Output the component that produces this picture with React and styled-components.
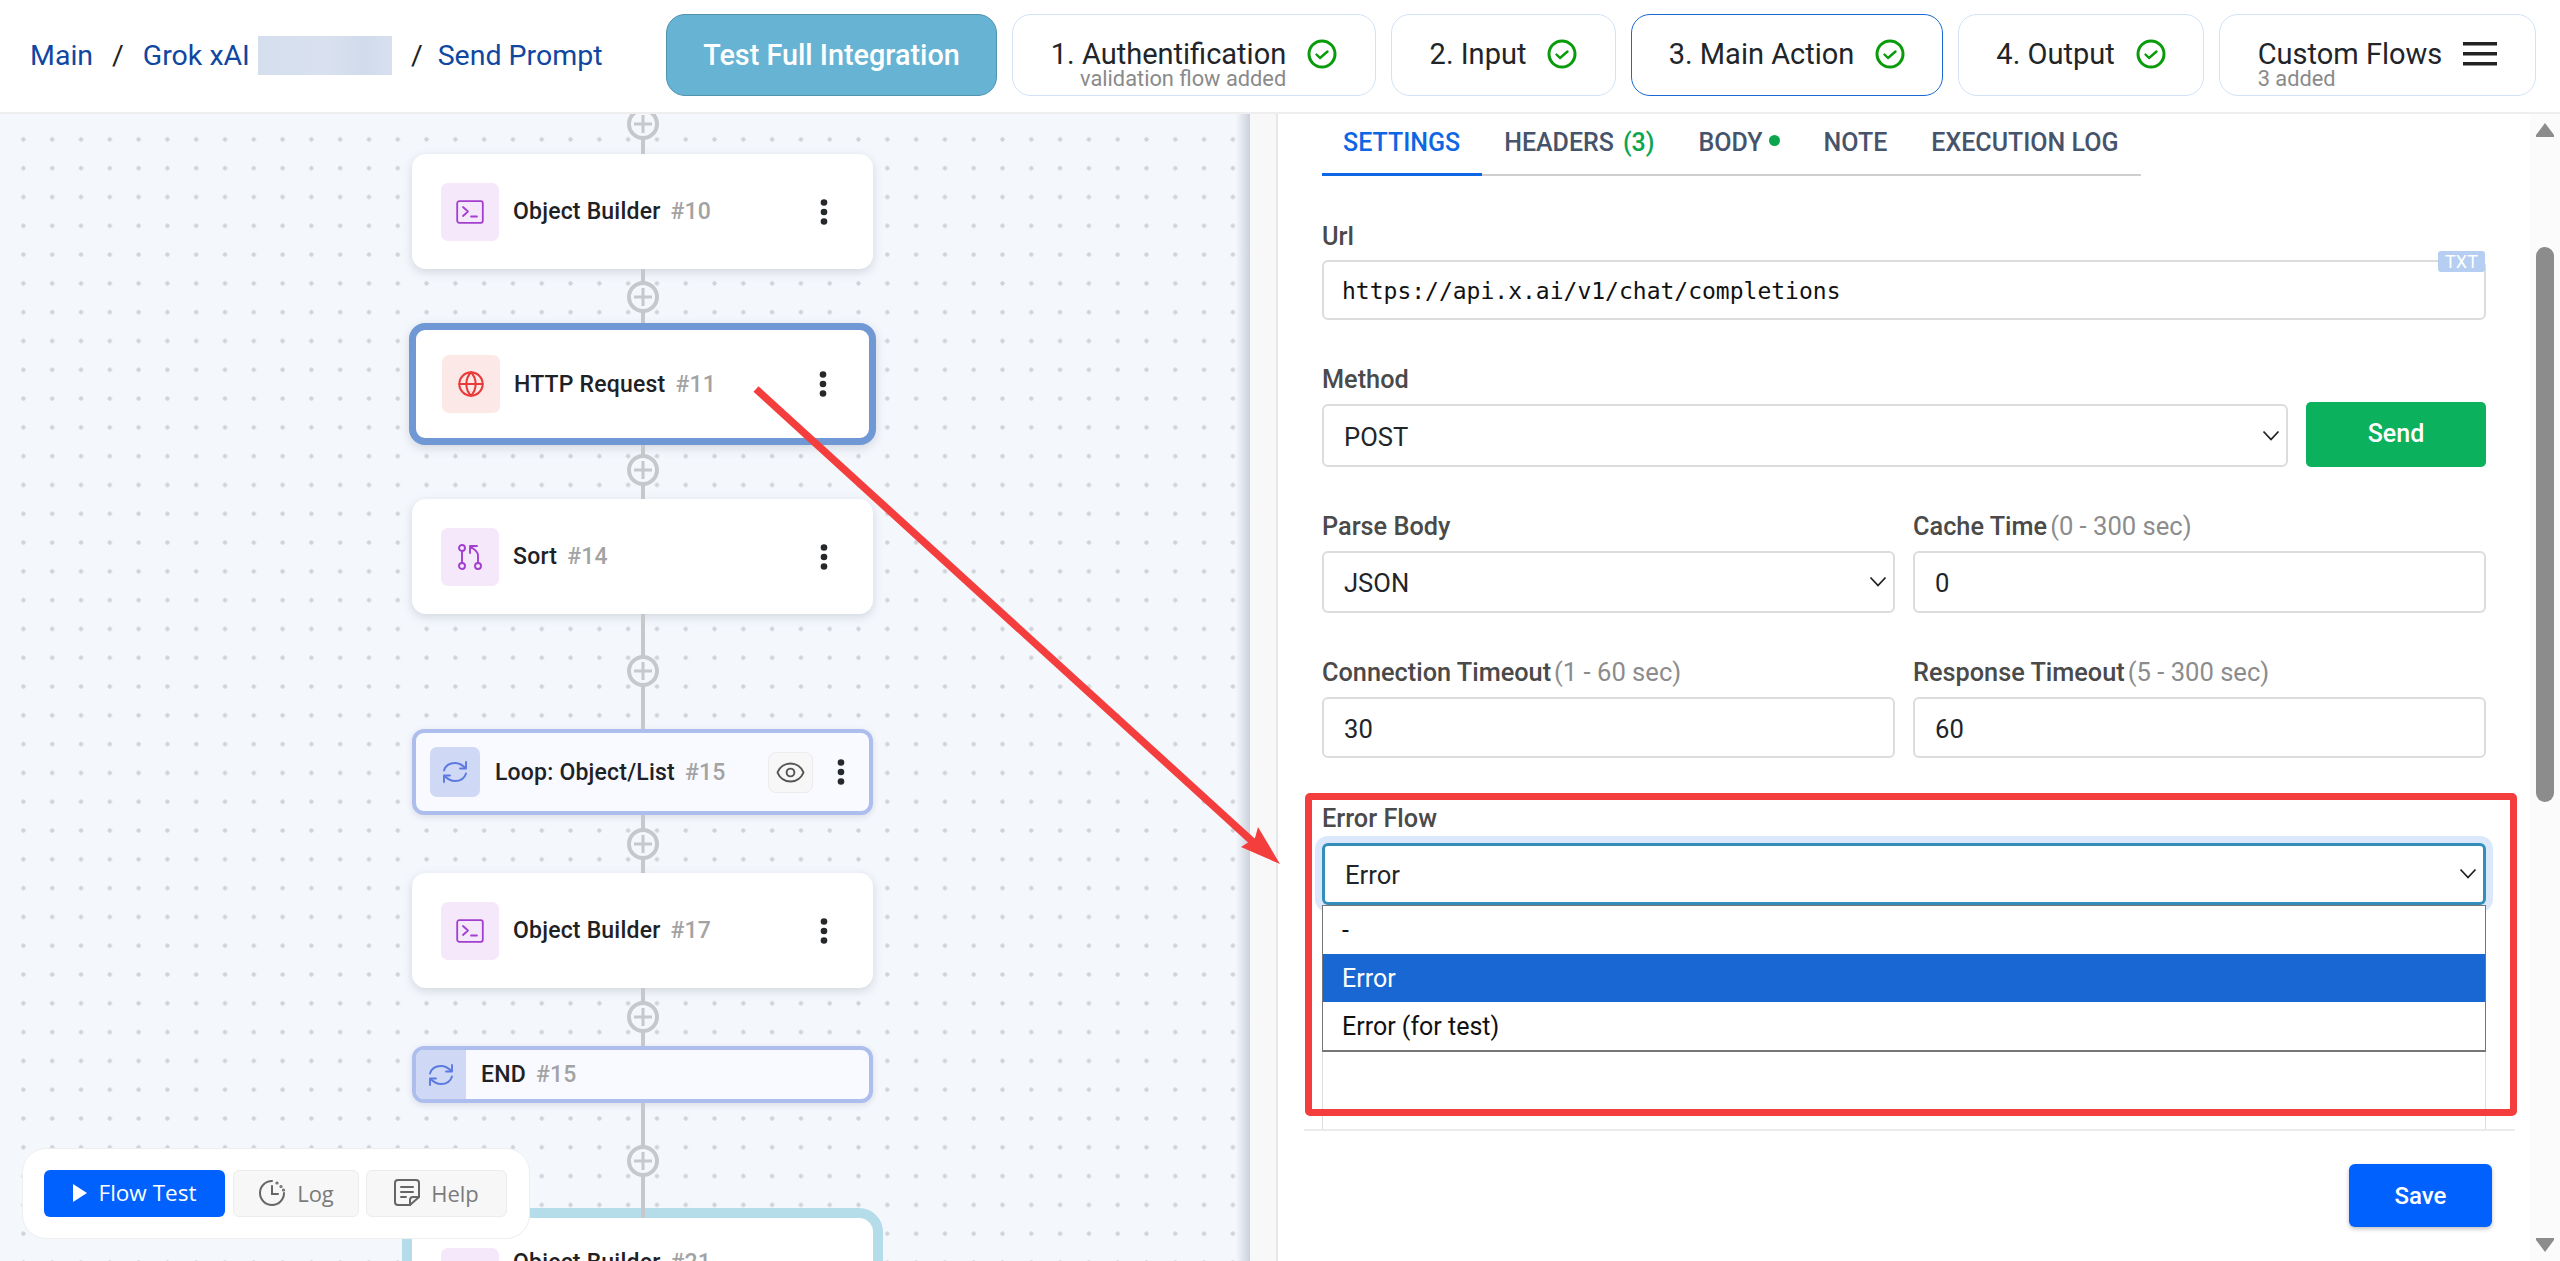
import React from 'react';
import styled, { createGlobalStyle } from 'styled-components';
import { Globe, Eye } from 'lucide-react';

const Global = createGlobalStyle`
  html, body { margin: 0; padding: 0; height: 100%; overflow: hidden; background: #fff; }
  * { box-sizing: border-box; }
  body { font-family: Roboto, "Liberation Sans", sans-serif; color: #212529; }
`;

const Page = styled.div`
  position: relative;
  width: 2560px;
  height: 1261px;
  display: flex;
  flex-direction: column;
  overflow: hidden;
`;

const Header = styled.header`
  height: 114px;
  flex: none;
  display: flex;
  align-items: center;
  padding: 0 23px 2px 30px;
  border-bottom: 2px solid #eeeeee;
  background: #fff;
`;

const Crumbs = styled.nav`
  display: flex;
  align-items: center;
  font-size: 28.5px;
  color: #1d4f9f;
  width: 636px;
  flex: none;
`;
const Crumb = styled.span`
  color: #0f47a1;
`;
const Sep = styled.span`
  color: #222;
  margin: 0 ${p => p.$r ?? 19}px 0 19px;
`;
const Blur = styled.span`
  width: 134px;
  height: 39px;
  margin-left: 8px;
  background: linear-gradient(90deg, #d4deed, #d9e1ef 50%, #d0dbeb 80%, #d8e0ef);
`;

const TopBar = styled.div`
  display: flex;
  gap: 15px;
`;
const TestButton = styled.button`
  width: 331px;
  height: 82px;
  border: 1px solid #4f93ad;
  border-radius: 19px;
  background: #66b3d3;
  color: #fff;
  font: 500 28.8px Roboto, sans-serif;
  padding: 0;
`;
const StepTab = styled.div`
  height: 82px;
  width: ${p => p.$w}px;
  border: 1.5px solid ${p => (p.$active ? '#1b68d4' : '#d3e2f8')};
  border-radius: 19px;
  background: #fff;
  display: flex;
  align-items: center;
  justify-content: center;
  gap: 21px;
  padding-bottom: 2px;
`;
const StepText = styled.div`
  display: flex;
  flex-direction: column;
  align-items: ${p => (p.$left ? 'flex-start' : 'flex-end')};
`;
const StepTitle = styled.span`
  font-size: 29px;
  line-height: 30px;
  color: #212529;
  white-space: nowrap;
`;
const StepSub = styled.span`
  font-size: 21.8px;
  line-height: 20px;
  margin-bottom: -20px;
  color: #8a8a8a;
  white-space: nowrap;
`;
const CheckSvg = styled.svg`
  flex: none;
`;

const Check = () => (
  <CheckSvg width="30" height="30" viewBox="0 0 30 30" fill="none" stroke="#0a9b0a" strokeWidth="3">
    <circle cx="15" cy="15" r="13" />
    <path d="M9.5 15.5l3.5 3.5 7.5-6.5" strokeWidth="2.4" strokeLinecap="round" strokeLinejoin="round" />
  </CheckSvg>
);

const Body = styled.div`
  flex: 1;
  display: flex;
  min-height: 0;
`;

const Canvas = styled.section`
  width: 1250px;
  flex: none;
  position: relative;
  overflow: hidden;
  background-color: #f4f7fc;
  background-image: radial-gradient(circle, #d0d3d7 1.9px, transparent 2.4px);
  background-size: 28.8px 28.8px;
  background-position: 9px 11px;
`;
const EdgeShade = styled.div`
  position: absolute;
  top: 0;
  right: 0;
  bottom: 0;
  width: 14px;
  background: linear-gradient(90deg, rgba(140, 150, 170, 0), rgba(140, 150, 170, 0.4));
`;
const Stack = styled.div`
  width: 481px;
  margin-left: 402px;
  display: flex;
  flex-direction: column;
  align-items: center;
`;
const Connector = styled.div`
  width: 4px;
  height: ${p => p.$h}px;
  margin-bottom: ${p => p.$over ?? 0}px;
  background: #c6c8cb;
  position: relative;
  z-index: 1;
  flex: none;
`;
const PlusWrap = styled.div`
  position: absolute;
  left: 50%;
  top: ${p => p.$top}px;
  width: 32px;
  height: 32px;
  margin: -16px 0 0 -16px;
  border-radius: 50%;
  background: #f4f7fc;
  border: 4px solid #c6c8cb;
  display: flex;
  align-items: center;
  justify-content: center;
`;
const Plus = ({ top }) => (
  <PlusWrap $top={top}>
    <svg width="18" height="18" viewBox="0 0 18 18" stroke="#c6c8cb" strokeWidth="3">
      <path d="M9 0v18M0 9h18" />
    </svg>
  </PlusWrap>
);

const Node = styled.div`
  width: 461px;
  height: 115px;
  flex: none;
  background: #fff;
  border-radius: 14px;
  box-shadow: 0 3px 10px rgba(110, 120, 140, 0.25);
  display: flex;
  align-items: center;
  padding: 0 45px 0 29px;
`;
const SelectedNode = styled(Node)`
  width: 467px;
  height: 122px;
  border: 7px solid #6f98d4;
  border-radius: 16px;
  padding: 0 42px 0 26px;
`;
const TealNode = styled(Node)`
  width: 481px;
  height: 135px;
  border: 10px solid #b5dce9;
  border-radius: 24px;
  box-shadow: none;
  align-items: flex-start;
  padding: 30px 35px 0 29px;
`;
const IconTile = styled.div`
  width: 58px;
  height: 58px;
  flex: none;
  border-radius: 7px;
  background: ${p => p.$bg};
  display: flex;
  align-items: center;
  justify-content: center;
`;
const NodeTitle = styled.div`
  flex: 1;
  margin-left: 14px;
  font-size: 23px;
  font-weight: 500;
  letter-spacing: 0.2px;
  color: #1e2125;
  white-space: nowrap;
`;
const TealTitle = styled(NodeTitle)`
  line-height: 27px;
  margin-top: 1px;
`;
const NodeId = styled.span`
  color: #a3a3a3;
  margin-left: 10px;
`;
const DotsSvg = styled.svg`
  flex: none;
`;
const Dots = () => (
  <DotsSvg width="8" height="26" viewBox="0 0 8 26" fill="#26292c">
    <circle cx="4" cy="3.5" r="3.3" />
    <circle cx="4" cy="13" r="3.3" />
    <circle cx="4" cy="22.5" r="3.3" />
  </DotsSvg>
);

const LoopNode = styled.div`
  width: 461px;
  height: 86px;
  flex: none;
  background: #f8faff;
  border: 4px solid #adbdee;
  border-radius: 12px;
  box-shadow: 0 2px 6px rgba(110, 120, 140, 0.2);
  display: flex;
  align-items: center;
  padding: 0 24px 0 14px;
`;
const LoopTile = styled.div`
  width: 50px;
  height: 50px;
  border-radius: 7px;
  background: #cfd9f6;
  flex: none;
  display: flex;
  align-items: center;
  justify-content: center;
`;
const LoopTitle = styled(NodeTitle)`
  margin-left: 15px;
`;
const EyeBox = styled.div`
  width: 45px;
  height: 41px;
  flex: none;
  border: 1.5px solid #ececec;
  border-radius: 8px;
  background: #f7f7f7;
  color: #555;
  display: flex;
  align-items: center;
  justify-content: center;
  margin-right: 24px;
`;
const EndNode = styled.div`
  width: 461px;
  height: 57px;
  flex: none;
  background: #f8faff;
  border: 4px solid #adbdee;
  border-radius: 12px;
  box-shadow: 0 2px 6px rgba(110, 120, 140, 0.2);
  display: flex;
  align-items: center;
  overflow: hidden;
`;
const EndTile = styled.div`
  width: 50px;
  align-self: stretch;
  background: #cfd9f6;
  flex: none;
  display: flex;
  align-items: center;
  justify-content: center;
`;

const Terminal = () => (
  <svg width="28" height="24" viewBox="0 0 28 24" fill="none" stroke="#a23fd0" strokeWidth="1.8" strokeLinecap="round" strokeLinejoin="round">
    <rect x="1.2" y="1.2" width="25.6" height="21.6" rx="2" />
    <path d="M7 7l5 4.5-5 4.5M15 16.5h6" />
  </svg>
);
const SortIcon = () => (
  <svg width="28" height="28" viewBox="0 0 28 28" fill="none" stroke="#a23fd0" strokeWidth="1.9" strokeLinecap="round" strokeLinejoin="round">
    <circle cx="6" cy="5" r="3" />
    <circle cx="6" cy="23" r="3" />
    <circle cx="22" cy="23" r="3" />
    <path d="M6 8v12M22 20v-8c0-3-4-6-7-8M14 10V3h7" />
  </svg>
);
const LoopIcon = () => (
  <svg width="26" height="26" viewBox="0 0 26 26" fill="none" stroke="#5c79e0" strokeWidth="1.9" strokeLinecap="round" strokeLinejoin="round">
    <path d="M2 11.5C3.5 6.5 8 4 13 4c4 0 7 1.6 10.5 5" />
    <path d="M24 3v6.5h-6" />
    <path d="M24 14.5c-1.5 5-6 7.5-11 7.5-4 0-7-1.6-10.5-5" />
    <path d="M2 23v-6.5h6" />
  </svg>
);

const Toolbar = styled.div`
  position: absolute;
  left: 22px;
  top: 1034px;
  width: 508px;
  height: 91px;
  background: #fff;
  border: 1px solid #eeeeee;
  border-radius: 24px;
  display: flex;
  align-items: center;
  gap: 7px;
  padding: 0 21px;
  font-family: "Open Sans", sans-serif;
`;
const RunButton = styled.button`
  width: 181px;
  height: 47px;
  margin-right: 1px;
  border: 0;
  border-radius: 6px;
  background: #0061fe;
  color: #fff;
  font: 500 22.5px "Open Sans", sans-serif;
  display: flex;
  align-items: center;
  justify-content: center;
  gap: 12px;
  padding: 0 0 2px;
`;
const GhostButton = styled.button`
  width: ${p => p.$w}px;
  height: 47px;
  border: 1.5px solid #ececec;
  border-radius: 6px;
  background: #f7f7f7;
  color: #7b7b7b;
  font: 500 22px "Open Sans", sans-serif;
  display: flex;
  align-items: center;
  justify-content: center;
  gap: 11px;
  padding: 0 0 2px;
`;

const Gutter = styled.div`
  width: 28px;
  flex: none;
  background: #f8f8f8;
  border-right: 2px solid #e8e8e8;
`;

const Panel = styled.section`
  flex: 1;
  min-width: 0;
  display: flex;
  flex-direction: column;
  padding: 0 15px 0 26px;
`;
const Scroller = styled.div`
  height: 1017px;
  flex: none;
  overflow: hidden;
  padding: 0 29px 0 18px;
  border-bottom: 2px solid #ebebeb;
`;
const Tabs = styled.div`
  display: flex;
  width: 819px;
  height: 62px;
  border-bottom: 2px solid #cfcfcf;
  margin-bottom: 46px;
`;
const TabItem = styled.div`
  height: 62px;
  padding: 9px ${p => p.$r ?? 22}px 0 ${p => p.$l ?? 22}px;
  font-size: 25px;
  font-weight: 500;
  line-height: 40px;
  color: ${p => (p.$active ? '#0d66e4' : '#46546b')};
  border-bottom: ${p => (p.$active ? '3px solid #0d66e4' : '0')};
  white-space: nowrap;
  display: flex;
`;
const TabCount = styled.span`
  color: #0aa64f;
  margin-left: 9px;
`;
const TabDot = styled.span`
  width: 11px;
  height: 11px;
  border-radius: 50%;
  background: #0aa64f;
  margin: 12px 0 0 6px;
`;

const Field = styled.div`
  position: relative;
  margin-bottom: ${p => p.$mb ?? 45}px;
  min-width: 0;
`;
const Row = styled.div`
  display: flex;
  gap: 18px;
`;
const RowCell = styled.div`
  flex: 1;
  min-width: 0;
`;
const Label = styled.label`
  display: block;
  height: 26px;
  line-height: 29px;
  margin-bottom: ${p => p.$mb ?? 13}px;
  font-size: 25.3px;
  font-weight: 500;
  color: #4a4a4a;
  white-space: nowrap;
`;
const Hint = styled.span`
  font-size: 25.6px;
  font-weight: 400;
  color: #8c8c8c;
  margin-left: 3px;
`;
const Control = styled.div`
  height: ${p => p.$h ?? 62}px;
  border: 2.5px solid #dcdcdc;
  border-radius: 6px;
  background: #fff;
  font-size: 25.6px;
  color: #212529;
  display: flex;
  align-items: center;
  padding: 2px 20px 0;
  position: relative;
`;
const MonoValue = styled.span`
  font: 400 23px "DejaVu Sans Mono", monospace;
  color: #111;
  margin-left: -2px;
`;
const Badge = styled.span`
  position: absolute;
  top: -11px;
  right: -1px;
  width: 47px;
  height: 21px;
  background: #b5cef2;
  border-radius: 3px;
  color: #fff;
  font-size: 18px;
  line-height: 21px;
  text-align: center;
`;
const Caret = styled.svg`
  position: absolute;
  right: 6px;
  top: 50%;
  margin-top: -8px;
`;
const Chevron = () => (
  <Caret width="18" height="15" viewBox="0 0 18 15" fill="none" stroke="#222" strokeWidth="1.8">
    <path d="M1.5 3.5l7.5 8 7.5-8" />
  </Caret>
);
const SendButton = styled.button`
  width: 180px;
  height: 65px;
  flex: none;
  margin-top: -2px;
  padding-bottom: 4px;
  border: 0;
  border-radius: 5px;
  background: #0bb15d;
  color: #fff;
  font: 500 25px Roboto, sans-serif;
`;
const MethodRow = styled.div`
  display: flex;
  gap: 18px;
  align-items: flex-start;
`;
const MethodSelect = styled(Control)`
  flex: 1;
`;
const FocusSelect = styled(Control)`
  border: 3px solid #338fba;
  box-shadow: 0 0 0 7px #dbe8fb;
`;
const ListBox = styled.ul`
  position: absolute;
  z-index: 3;
  left: 0;
  right: 0;
  top: 100%;
  margin: 0;
  padding: 0;
  list-style: none;
  background: #fff;
  border: 1px solid #767676;
  border-bottom-width: 2px;
`;
const ListItem = styled.li`
  height: 48px;
  line-height: 50px;
  padding-left: 19px;
  font-size: 25px;
  color: ${p => (p.$on ? '#fff' : '#111')};
  background: ${p => (p.$on ? '#1967d2' : '#fff')};
`;
const HiddenField = styled.div`
  height: 300px;
  border: solid #dedede;
  border-width: 0 1px;
`;
const ControlWrap = styled.div`
  position: relative;
`;

const Footer = styled.div`
  flex: 1;
  display: flex;
  justify-content: flex-end;
  align-items: flex-start;
  padding: 33px 18px 0 0;
`;
const SaveButton = styled.button`
  width: 143px;
  height: 63px;
  margin-right: 5px;
  border: 0;
  border-radius: 6px;
  background: #0061fe;
  box-shadow: 0 2px 4px rgba(0, 0, 0, 0.25);
  color: #fff;
  font: 500 24px Roboto, sans-serif;
`;

const ScrollBar = styled.div`
  width: 30px;
  flex: none;
  background: #fbfbfb;
  display: flex;
  flex-direction: column;
  align-items: center;
  padding: 9px 0 0;
`;
const Thumb = styled.div`
  width: 18px;
  height: 555px;
  margin-top: 110px;
  border-radius: 9px;
  background: #8c8c8c;
`;
const Arrow = styled.svg`
  flex: none;
`;
const DownArrow = styled(Arrow)`
  margin-top: 436px;
`;

const Overlay = styled.svg`
  position: absolute;
  left: 0;
  top: 0;
  pointer-events: none;
  z-index: 5;
`;
const RedBox = styled.div`
  position: absolute;
  left: 1305px;
  top: 793px;
  width: 1212px;
  height: 323px;
  border: 7px solid #f43e3e;
  border-radius: 5px;
  z-index: 5;
  pointer-events: none;
`;

const steps = [
  { t: '1. Authentification', sub: 'validation flow added', w: 364 },
  { t: '2. Input', w: 225 },
  { t: '3. Main Action', w: 312, active: true },
  { t: '4. Output', w: 246 },
];

export default function App() {
  return (
    <Page>
      <Global />
      <Header>
        <Crumbs>
          <Crumb>Main</Crumb>
          <Sep>/</Sep>
          <Crumb>Grok xAI</Crumb>
          <Blur />
          <Sep $r={15}>/</Sep>
          <Crumb>Send Prompt</Crumb>
        </Crumbs>
        <TopBar>
          <TestButton>Test Full Integration</TestButton>
          {steps.map(s => (
            <StepTab key={s.t} $w={s.w} $active={s.active}>
              <StepText>
                <StepTitle>{s.t}</StepTitle>
                {s.sub && <StepSub>{s.sub}</StepSub>}
              </StepText>
              <Check />
            </StepTab>
          ))}
          <StepTab $w={317}>
            <StepText $left>
              <StepTitle>Custom Flows</StepTitle>
              <StepSub>3 added</StepSub>
            </StepText>
            <svg width="34" height="24" viewBox="0 0 34 24" fill="#222">
              <rect y="0" width="34" height="3.5" />
              <rect y="10" width="34" height="3.5" />
              <rect y="20" width="34" height="3.5" />
            </svg>
          </StepTab>
        </TopBar>
      </Header>
      <Body>
        <Canvas>
          <Stack>
            <Connector $h={40}><Plus top={10} /></Connector>
            <Node>
              <IconTile $bg="#f4e8fa"><Terminal /></IconTile>
              <NodeTitle>Object Builder<NodeId>#10</NodeId></NodeTitle>
              <Dots />
            </Node>
            <Connector $h={54}><Plus top={28} /></Connector>
            <SelectedNode>
              <IconTile $bg="#fde8e8"><Globe size={28} color="#ea3b3b" strokeWidth={1.8} /></IconTile>
              <NodeTitle>HTTP Request<NodeId>#11</NodeId></NodeTitle>
              <Dots />
            </SelectedNode>
            <Connector $h={54}><Plus top={25} /></Connector>
            <Node>
              <IconTile $bg="#f4e8fa"><SortIcon /></IconTile>
              <NodeTitle>Sort<NodeId>#14</NodeId></NodeTitle>
              <Dots />
            </Node>
            <Connector $h={115}><Plus top={57} /></Connector>
            <LoopNode>
              <LoopTile><LoopIcon /></LoopTile>
              <LoopTitle>Loop: Object/List<NodeId>#15</NodeId></LoopTitle>
              <EyeBox><Eye size={31} strokeWidth={1.5} /></EyeBox>
              <Dots />
            </LoopNode>
            <Connector $h={58}><Plus top={29} /></Connector>
            <Node>
              <IconTile $bg="#f4e8fa"><Terminal /></IconTile>
              <NodeTitle>Object Builder<NodeId>#17</NodeId></NodeTitle>
              <Dots />
            </Node>
            <Connector $h={58}><Plus top={29} /></Connector>
            <EndNode>
              <EndTile><LoopIcon /></EndTile>
              <LoopTitle>END<NodeId>#15</NodeId></LoopTitle>
            </EndNode>
            <Connector $h={115} $over={-10}><Plus top={58} /></Connector>
            <TealNode>
              <IconTile $bg="#f4e8fa"><Terminal /></IconTile>
              <TealTitle>Object Builder<NodeId>#21</NodeId></TealTitle>
            </TealNode>
          </Stack>
          <EdgeShade />
          <Toolbar>
            <RunButton>
              <svg width="14" height="18" viewBox="0 0 14 18" fill="#fff"><path d="M0 0l14 9-14 9z" /></svg>
              Flow Test
            </RunButton>
            <GhostButton $w={126}>
              <svg width="28" height="28" viewBox="0 0 28 28" fill="none" stroke="#666" strokeWidth="2" strokeLinecap="round">
                <path d="M14 2A12 12 0 1 0 26 14" />
                <path d="M14 7v8h6" />
                <circle cx="19" cy="4" r="0.6" />
                <circle cx="23" cy="7.5" r="0.6" />
                <circle cx="25.5" cy="11" r="0.6" />
              </svg>
              Log
            </GhostButton>
            <GhostButton $w={141}>
              <svg width="26" height="28" viewBox="0 0 26 28" fill="none" stroke="#666" strokeWidth="2" strokeLinecap="round" strokeLinejoin="round">
                <path d="M16 26H4a3 3 0 0 1-3-3V4a3 3 0 0 1 3-3h18a3 3 0 0 1 3 3v14z" />
                <path d="M16 26v-5a3 3 0 0 1 3-3h6M7 8h12M7 13h12M7 18h5" />
              </svg>
              Help
            </GhostButton>
          </Toolbar>
        </Canvas>
        <Gutter />
        <Panel>
          <Scroller>
            <Tabs>
              <TabItem $active $l={21}>SETTINGS</TabItem>
              <TabItem>HEADERS<TabCount>(3)</TabCount></TabItem>
              <TabItem $r={22}>BODY<TabDot /></TabItem>
              <TabItem>NOTE</TabItem>
              <TabItem>EXECUTION LOG</TabItem>
            </Tabs>
            <Field>
              <Label $mb={12}>Url</Label>
              <Control $h={60}>
                <MonoValue>https://api.x.ai/v1/chat/completions</MonoValue>
                <Badge>TXT</Badge>
              </Control>
            </Field>
            <Field>
              <Label>Method</Label>
              <MethodRow>
                <MethodSelect $h={63}>POST<Chevron /></MethodSelect>
                <SendButton>Send</SendButton>
              </MethodRow>
            </Field>
            <Field>
              <Row>
                <RowCell>
                  <Label>Parse Body</Label>
                  <Control>JSON<Chevron /></Control>
                </RowCell>
                <RowCell>
                  <Label>Cache Time<Hint>(0 - 300 sec)</Hint></Label>
                  <Control>0</Control>
                </RowCell>
              </Row>
            </Field>
            <Field $mb={46}>
              <Row>
                <RowCell>
                  <Label>Connection Timeout<Hint>(1 - 60 sec)</Hint></Label>
                  <Control $h={61}>30</Control>
                </RowCell>
                <RowCell>
                  <Label>Response Timeout<Hint>(5 - 300 sec)</Hint></Label>
                  <Control $h={61}>60</Control>
                </RowCell>
              </Row>
            </Field>
            <Field $mb={0}>
              <Label>Error Flow</Label>
              <ControlWrap>
                <FocusSelect>Error<Chevron /></FocusSelect>
                <ListBox>
                  <ListItem>-</ListItem>
                  <ListItem $on>Error</ListItem>
                  <ListItem>Error (for test)</ListItem>
                </ListBox>
              </ControlWrap>
              <HiddenField />
            </Field>
          </Scroller>
          <Footer>
            <SaveButton>Save</SaveButton>
          </Footer>
        </Panel>
        <ScrollBar>
          <Arrow width="18" height="14" viewBox="0 0 18 14" fill="#8c8c8c"><path d="M9 0l9 12v2H0v-2z" /></Arrow>
          <Thumb />
          <DownArrow width="18" height="14" viewBox="0 0 18 14" fill="#8c8c8c"><path d="M0 0h18v2L9 14 0 2z" /></DownArrow>
        </ScrollBar>
      </Body>
      <RedBox />
      <Overlay width="2560" height="1261" viewBox="0 0 2560 1261">
        <path d="M756 389L1253 842" stroke="#f43e3e" strokeWidth="7.5" fill="none" />
        <path d="M1280 864L1258 827L1255 838L1241 847z" fill="#f43e3e" />
      </Overlay>
    </Page>
  );
}
